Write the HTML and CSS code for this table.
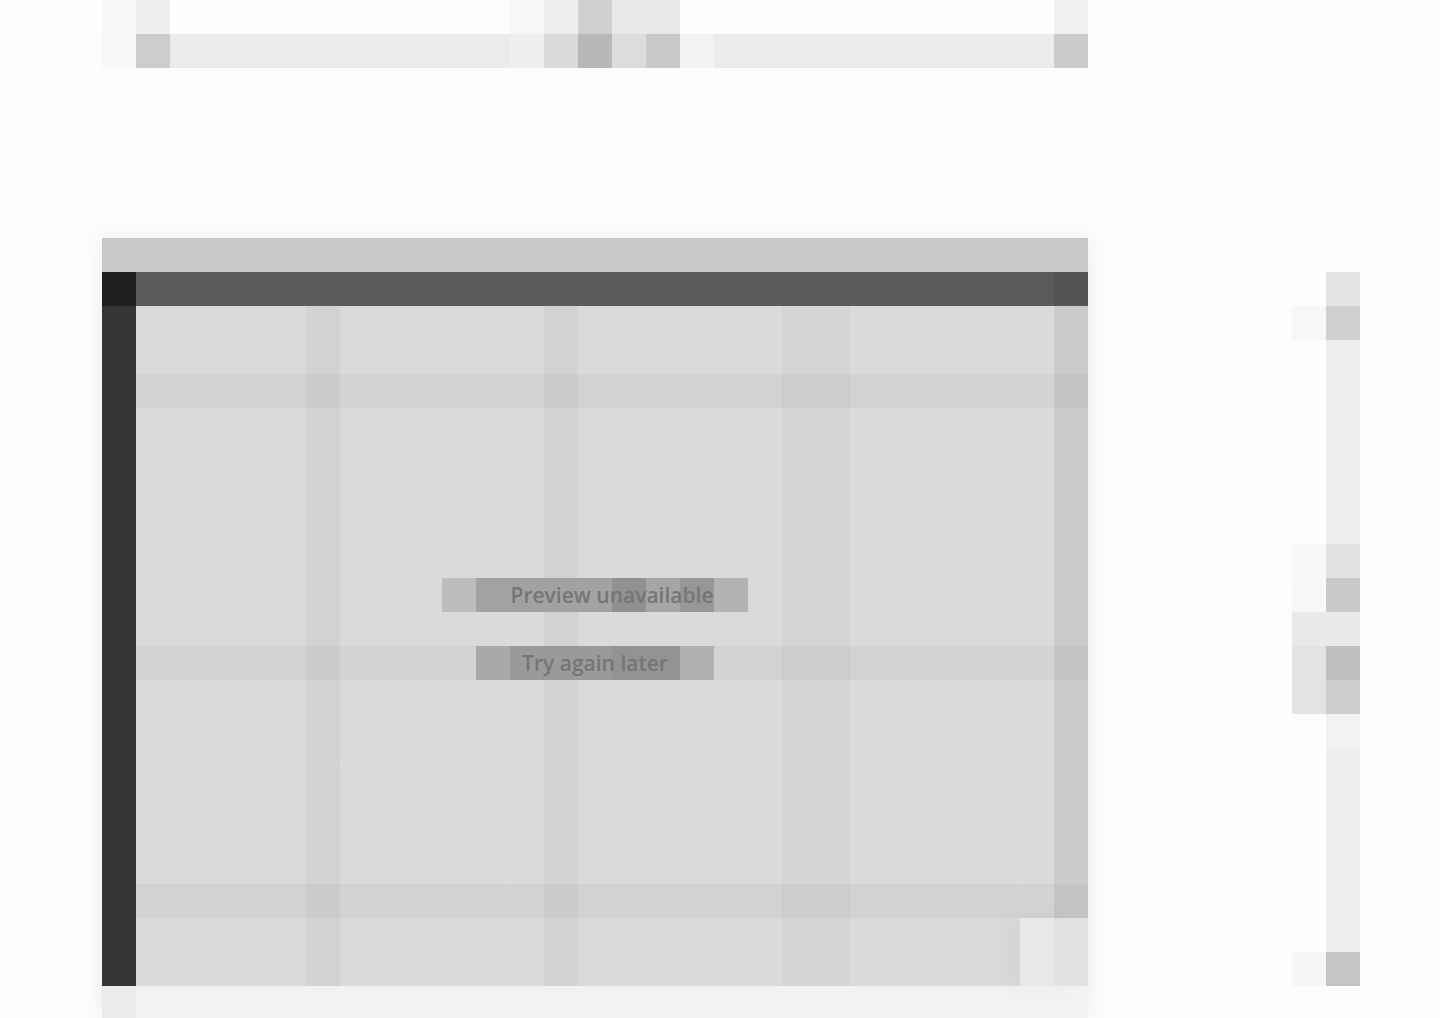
FILE: index.html
```html
<!DOCTYPE html>
<html lang="en">
<head>
<meta charset="utf-8">
<title>Workspace</title>
<link rel="stylesheet" href="styles.css">
</head>
<body>
<div class="page">
  <section class="form-tail">
    <div class="ft-row r1">
      <span class="c c-a"></span><span class="c c-chk"></span><span class="c c-field"></span><span class="c c-sep"></span>
      <span class="c c-i1"></span><span class="c c-i2"></span><span class="c c-i3"></span><span class="c c-i4"></span>
      <span class="c c-field2"></span><span class="c c-end"></span>
    </div>
    <div class="ft-row r2">
      <span class="c c-a"></span><span class="c c-chk"></span><span class="c c-field"></span><span class="c c-sep"></span>
      <span class="c c-i1"></span><span class="c c-i2"></span><span class="c c-i3"></span><span class="c c-i4"></span>
      <span class="c c-field2"></span><span class="c c-end"></span>
    </div>
  </section>

  <main class="workspace">
    <div class="card">
      <div class="card-title"></div>
      <div class="card-grid">
        <div class="corner"></div>
        <div class="toolbar"><span class="tb-fill"></span><span class="tb-end"></span></div>
        <div class="sidebar"></div>
        <div class="canvas">
          <div class="message">
            <div class="msg-line">
              <span class="msg-icon"></span>
              <span class="msg-text t1">Preview unavailable</span>
            </div>
            <div class="msg-line">
              <span class="msg-text t2">Try again later</span>
            </div>
          </div>
          <button class="fab" aria-label="Resize"></button>
        </div>
      </div>
      <div class="card-footer"><span class="ff-start"></span></div>
    </div>

    <aside class="rail">
      <span class="seg s-top"></span>
      <span class="seg s-mark"></span>
      <span class="seg s-track h204"></span>
      <span class="seg s-pre"></span>
      <span class="seg s-mark2"></span>
      <span class="seg s-gap"></span>
      <span class="seg s-thumb"></span>
      <span class="seg s-thumb2"></span>
      <span class="seg s-post"></span>
      <span class="seg s-track h204"></span>
      <span class="seg s-end"></span>
      <span class="rail-tip"></span>
    </aside>
  </main>
</div>
</body>
</html>
```

FILE: styles.css
```css
* { box-sizing: border-box; }

html, body {
  margin: 0;
  padding: 0;
  background: #fdfdfd;
  font-family: "Open Sans", "Liberation Sans", sans-serif;
  overflow: hidden;
}

.page {
  width: 1440px;
  height: 1018px;
  display: flex;
  flex-direction: column;
}

/* ---------- top form remainder ---------- */
.form-tail {
  margin-left: 102px;
  width: 986px;
  display: flex;
  flex-direction: column;
}

.ft-row {
  display: grid;
  grid-template-columns: 34px 34px 340px 34px 34px 34px 34px 34px 374px 34px;
  height: 34px;
}

.c { display: block; }

.r1 .c-a { background: #f9f9f9; }
.r1 .c-chk { background: #efefef; }
.r1 .c-field { background: #fdfdfd; }
.r1 .c-sep { background: #f7f7f7; }
.r1 .c-i1 { background: #eeeeee; }
.r1 .c-i2 { background: #d0d0d0; }
.r1 .c-i3 { background: #e8e8e8; }
.r1 .c-i4 { background: #e8e8e8; }
.r1 .c-field2 { background: #fdfdfd; }
.r1 .c-end { background: #f0f0f0; }

.r2 .c-a { background: #f7f7f7; }
.r2 .c-chk { background: #cdcdcd; }
.r2 .c-field { background: #ebebeb; }
.r2 .c-sep { background: #efefef; }
.r2 .c-i1 { background: #dadada; }
.r2 .c-i2 { background: #b8b8b8; }
.r2 .c-i3 { background: #dcdcdc; }
.r2 .c-i4 { background: #c9c9c9; }
.r2 .c-field2 { background: linear-gradient(to right, #f3f3f3 0 34px, #ebebeb 34px); }
.r2 .c-end { background: #cbcbcb; }

/* ---------- workspace ---------- */
.workspace {
  margin-top: 170px;
  display: flex;
  align-items: flex-start;
}

.card {
  margin-left: 102px;
  width: 986px;
  display: flex;
  flex-direction: column;
  box-shadow: 0 0 26px rgba(0, 0, 0, 0.07);
  background: #f2f2f2;
}

.card-title {
  height: 34px;
  background: #c8c8c8;
}

.card-grid {
  display: grid;
  grid-template-columns: 34px 952px;
  grid-template-rows: 34px 680px;
}

.corner { background: #1e1e1e; }

.toolbar {
  display: flex;
  background: #5b5b5b;
}
.tb-fill { flex: 1; }
.tb-end { width: 34px; background: #545454; }

.sidebar { background: #363636; }

.canvas {
  position: relative;
  background-color: #dadada;
  background-image:
    linear-gradient(rgba(0,0,0,.035), rgba(0,0,0,.035)),
    linear-gradient(rgba(0,0,0,.035), rgba(0,0,0,.035)),
    linear-gradient(rgba(0,0,0,.035), rgba(0,0,0,.035)),
    linear-gradient(rgba(0,0,0,.035), rgba(0,0,0,.035)),
    linear-gradient(rgba(0,0,0,.035), rgba(0,0,0,.035)),
    linear-gradient(rgba(0,0,0,.025), rgba(0,0,0,.025)),
    linear-gradient(rgba(0,0,0,.07), rgba(0,0,0,.07));
  background-repeat: no-repeat;
  background-size:
    100% 34px,
    100% 34px,
    100% 34px,
    34px 100%,
    34px 100%,
    68px 100%,
    34px 100%;
  background-position:
    0 68px,
    0 340px,
    0 578px,
    170px 0,
    408px 0,
    646px 0,
    918px 0;
}

.message {
  width: 918px;
  padding-top: 272px;
  display: flex;
  flex-direction: column;
  align-items: center;
  gap: 34px;
}

.msg-line {
  display: flex;
  height: 34px;
  align-items: stretch;
}

.msg-icon {
  width: 34px;
  background: #bdbdbd;
}

.msg-text {
  display: block;
  height: 34px;
  line-height: 34px;
  font-size: 21px;
  font-weight: 600;
  color: #757575;
  text-align: center;
  white-space: nowrap;
  overflow: hidden;
}
.t1 {
  width: 272px;
  background: linear-gradient(to right, #a2a2a2 0 136px, #919191 136px 170px, #a6a6a6 170px 204px, #979797 204px 238px, #b3b3b3 238px);
}
.t2 {
  width: 238px;
  background: linear-gradient(to right, #a9a9a9 0 34px, #9a9a9a 34px 136px, #939393 136px 204px, #b0b0b0 204px);
}

.fab {
  position: absolute;
  right: 0;
  bottom: 0;
  width: 68px;
  height: 68px;
  border: 0;
  padding: 0;
  background: linear-gradient(to right, #e9e9e9 0 34px, #e2e2e2 34px);
  box-shadow: -14px 0 18px rgba(0, 0, 0, 0.03);
}

.card-footer {
  height: 32px;
  background: #f2f2f2;
  display: flex;
}
.ff-start { width: 34px; background: #ebebeb; }

/* ---------- right rail ---------- */
.rail {
  position: relative;
  margin-left: 238px;
  margin-top: 34px;
  width: 34px;
  display: flex;
  flex-direction: column;
}

.seg { display: block; height: 34px; }
.seg.h204 { height: 204px; }
.s-top { background: #e4e4e4; }
.s-mark { background: #cfcfcf; box-shadow: -34px 0 0 #f7f7f7; }
.s-track { background: #eeeeee; }
.s-pre { background: #e2e2e2; box-shadow: -34px 0 0 #f8f8f8; }
.s-mark2 { background: #c9c9c9; box-shadow: -34px 0 0 #f7f7f7; }
.s-gap { background: #e9e9e9; }
.s-thumb { background: #bfbfbf; }
.s-thumb2 { background: #cdcdcd; }
.s-post { background: #f2f2f2; }
.s-end { background: #c5c5c5; box-shadow: -34px 0 0 #f6f6f6; }

.rail-tip {
  position: absolute;
  left: -34px;
  top: 340px;
  width: 34px;
  height: 102px;
  background: linear-gradient(#e9e9e9 0 34px, #e3e3e3 34px);
}
```
